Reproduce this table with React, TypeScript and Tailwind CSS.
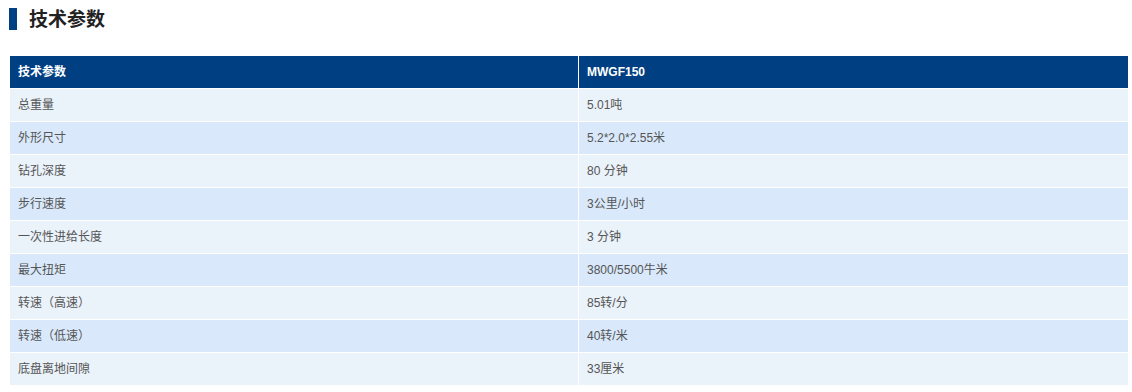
import React from "react";

const rows: [string, string][] = [
  ["总重量", "5.01吨"],
  ["外形尺寸", "5.2*2.0*2.55米"],
  ["钻孔深度", "80 分钟"],
  ["步行速度", "3公里/小时"],
  ["一次性进给长度", "3 分钟"],
  ["最大扭矩", "3800/5500牛米"],
  ["转速（高速）", "85转/分"],
  ["转速（低速）", "40转/米"],
  ["底盘离地间隙", "33厘米"],
];

export default function App() {
  return (
    <div
      className="w-[1132px] h-[392px] bg-white"
      style={{ fontFamily: '"Liberation Sans", "Noto Sans CJK SC", sans-serif' }}
    >
      <div className="flex items-center h-[22px] mt-[8px] ml-[9px]">
        <div className="w-[8px] h-[22px] bg-[#003f82]" />
        <div className="ml-[12px] text-[19px] font-bold text-[#222] leading-none">技术参数</div>
      </div>
      <div className="mt-[26px] ml-[10px] w-[1118px] flex flex-col gap-px">
        <div className="flex h-[32px] bg-[#003f82] text-white text-[12px] font-bold">
          <div className="w-[568px] flex items-center pl-[8px]">技术参数</div>
          <div className="w-px bg-white" />
          <div className="flex-1 flex items-center pl-[8px]">MWGF150</div>
        </div>
        {rows.map(([k, v], i) => (
          <div
            key={k}
            className={`flex h-[32px] text-[12px] text-[#555] ${i % 2 === 0 ? "bg-[#eaf2fa]" : "bg-[#d9e9fb]"}`}
          >
            <div className="w-[568px] flex items-center pl-[8px]">{k}</div>
            <div className="w-px bg-white" />
            <div className="flex-1 flex items-center pl-[8px]">{v}</div>
          </div>
        ))}
      </div>
    </div>
  );
}
